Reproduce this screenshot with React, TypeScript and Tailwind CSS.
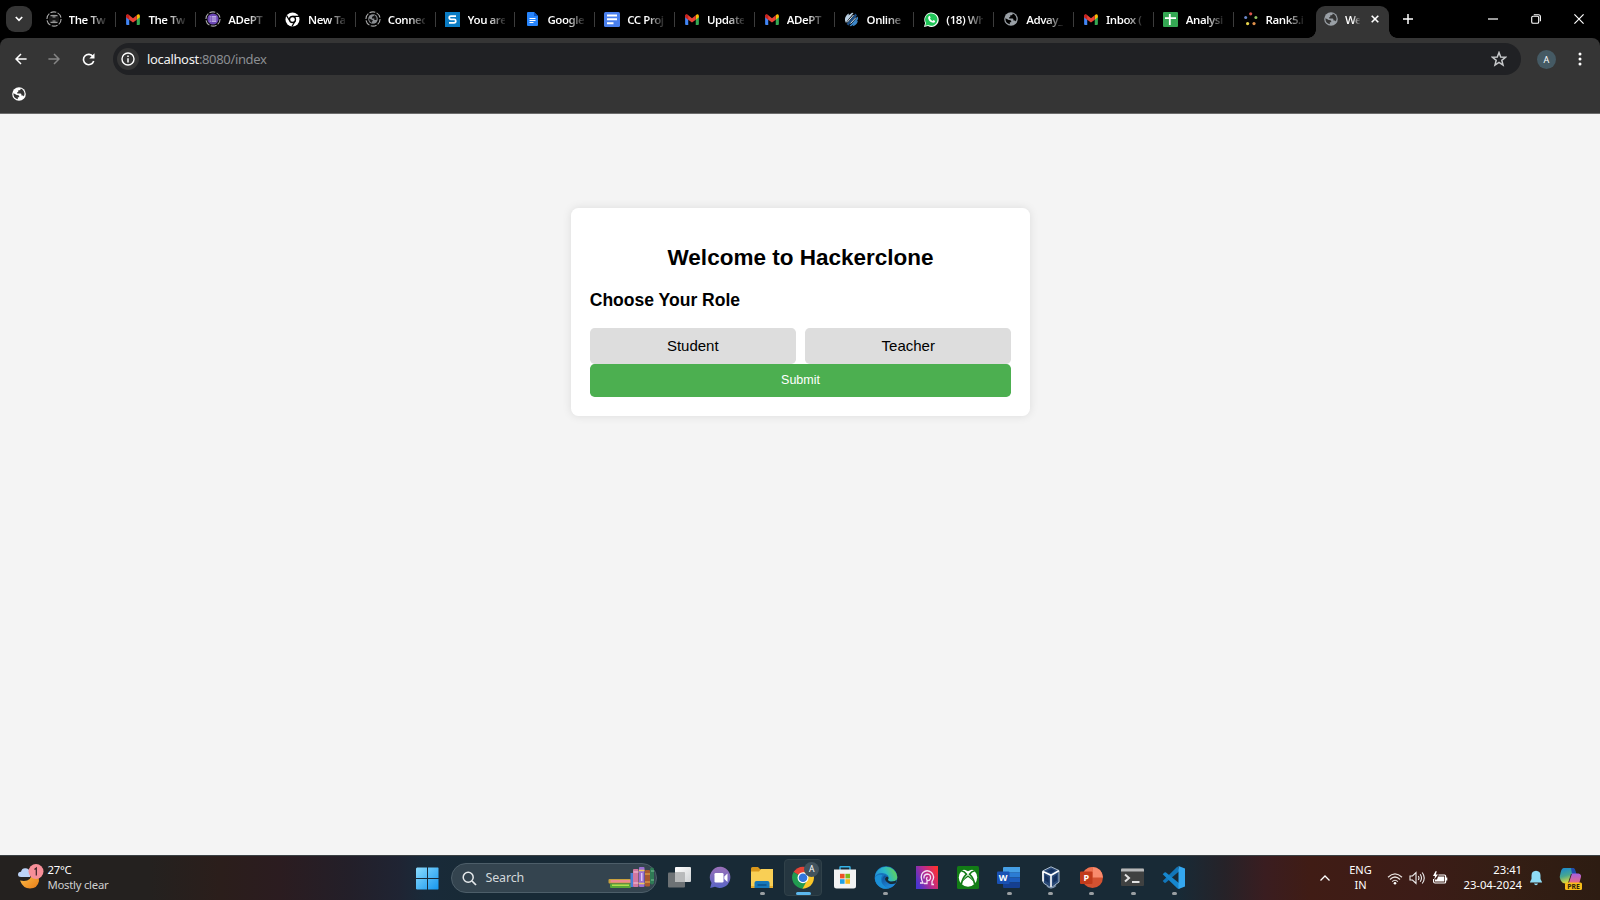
import type { ReactNode } from "react";

type IconProps = { size?: number; color?: string; bg?: string };

function Globe({ size = 14, color = "#9aa0a6", bg = "#000" }: IconProps) {
  return (
    <svg width={size} height={size} viewBox="0 0 14 14" className="shrink-0">
      <circle cx="7" cy="7" r="6.8" fill={color} />
      <path d="M8.8 1.6Q8.900 3 7.600 3.200H6.300V4.500Q6.200 5.200 5.200 5.200V6.500H8.400Q9.400 6.600 9.400 7.600V8.500H10.600Q11.600 8.600 11.700 9.500 12.600 8 12.500 6.500 12 3 8.800 1.600Z" fill={bg} />
      <path d="M1.500 6.200 4.800 7.900Q6.800 7.800 7.200 9V10.200H5.800V12.300Q1.600 11.200 1.400 7Z" fill={bg} />
    </svg>
  );
}

function Ring({ children }: { children: ReactNode }) {
  return (
    <svg width="16" height="16" viewBox="0 0 16 16" className="shrink-0">
      <circle cx="8" cy="8" r="7.1" fill="none" stroke="#a9a9a9" strokeWidth="1.1" strokeDasharray="6 1.400" />
      {children}
    </svg>
  );
}

function Gmail() {
  return (
    <svg width="14" height="11" viewBox="0 0 15 12" className="shrink-0">
      <path d="M0 2.5 3.4 5V12H1Q0 12 0 11Z" fill="#4285f4" />
      <path d="M15 2.5 11.6 5V12H14Q15 12 15 11Z" fill="#34a853" />
      <path d="M11.6 1.3 13 .4Q15 0 15 2.2V3.6L11.6 6.2Z" fill="#fbbc04" />
      <path d="M0 3.6V2Q.3 0 2.4.6L7.5 4.5 11.6 1.3V6.2L7.5 9.2 3.4 6.2Z" fill="#ea4335" />
      <path d="M0 3.6V2Q.3.6 1.6.4L3.4 1.7V6.2Z" fill="#c5221f" />
    </svg>
  );
}

const icons: Record<string, ReactNode> = {
  gmail: <Gmail />,
  globe: <Globe />,
  hourglass: (
    <Ring>
      <circle cx="8" cy="8" r="5.2" fill="#161616" />
      <path d="M4.5 4.700h7M4.500 11.300h7M6.5 6h3M6.5 10h3" stroke="#979797" strokeWidth="1.2" />
    </Ring>
  ),
  form: (
    <Ring>
      <circle cx="8" cy="8" r="5.6" fill="#6b47b5" />
      <path d="M4.7 5.8h1M4.7 8h1M4.7 10.2h1M6.6 5.8h4.7M6.6 8h4.7M6.6 10.2h4.7" stroke="#d9cdf3" strokeWidth="1.2" />
    </Ring>
  ),
  ringGlobe: (
    <Ring>
      <circle cx="8" cy="8" r="4.8" fill="#8a8d91" />
      <path d="M9.200 4Q9 5.200 7.400 5.500L7 6.700V7.500H9.300V9H11.500Q12.200 5.500 9.200 4ZM4 7.500 6.300 8.600 7.800 9.300V10.300H7V11.800Q4.200 11 4 7.500Z" fill="#111" />
    </Ring>
  ),
  chrome: (
    <svg width="15" height="15" viewBox="0 0 15 15" className="shrink-0">
      <circle cx="7.5" cy="7.5" r="7" fill="#fff" />
      <circle cx="7.5" cy="7.5" r="3" fill="#fff" stroke="#000" strokeWidth="1.3" />
      <path d="M7.5 4.4H14M4.8 9 1.6 3.6M10.2 9 7 14.4" stroke="#000" strokeWidth="1.2" />
    </svg>
  ),
  s: (
    <svg width="15" height="15" viewBox="0 0 15 15" className="shrink-0">
      <path d="M0 0h15v15H0z" fill="#0a7cc4" />
      <path d="M11 4.2H6Q4.2 4.2 4.2 5.8 4.2 7.4 6 7.4H9.2Q10.8 7.4 10.8 9 10.8 10.8 9 10.8H4" fill="none" stroke="#fff" strokeWidth="1.7" />
    </svg>
  ),
  docs: (
    <svg width="11" height="14" viewBox="0 0 11 14" className="shrink-0">
      <path d="M1 0H7L11 4V13Q11 14 10 14H1Q0 14 0 13V1Q0 0 1 0Z" fill="#2684fc" />
      <path d="M7 0 11 4H7Z" fill="#0b57c9" />
      <path d="M2.5 6.5h6M2.5 8.5h6M2.5 10.5h4" stroke="#fff" strokeWidth="1" />
    </svg>
  ),
  docsSquare: (
    <svg width="16" height="15" viewBox="0 0 16 15" className="shrink-0">
      <rect width="16" height="15" rx="1.5" fill="#4a80ee" />
      <path d="M3 3.4h10M3 7.200h10M3 11.200h6.5" stroke="#fff" strokeWidth="2" />
    </svg>
  ),
  online: (
    <svg width="15" height="15" viewBox="0 0 15 15" className="shrink-0">
      <path d="M1 8.500Q.5 5 3.500 2.200L5 1.500 4.500 3.500 8 .700 9.500 1 1.800 10.800Z" fill="#b9cfe2" />
      <path d="M2.500 12 11.500 1.600 13 3.500 4.500 13.500Z" fill="#1c4d84" />
      <path d="M5.500 14 14 4.600V7L12.500 9.500 14 8.500Q13 13 8.500 14.300L9.500 12.500 7 14.300Z" fill="#3b86c9" />
      <path d="M3 10.500 9.500 3M6.500 11.500 12 5.500" stroke="#d8e8f4" strokeWidth="1" />
    </svg>
  ),
  whatsapp: (
    <svg width="15" height="15" viewBox="0 0 15 15" className="shrink-0">
      <path d="M0 15 1.1 11A7.2 7.2 0 1 1 4 14Z" fill="#f4fff7" />
      <path d="M1.2 13.8 2 10.9A6.2 6.2 0 1 1 4.2 13Z" fill="#20c558" />
      <path d="M4.8 4.2Q5.5 3.5 6 4.2L6.6 5.6 6 6.5Q6.8 8.1 8.6 8.9L9.5 8Q11.4 8.8 11.2 9.2 10.8 10.8 9.2 10.8 5.3 10 4.2 6.4 4 5 4.8 4.2Z" fill="#fff" />
    </svg>
  ),
  sheets: (
    <svg width="15" height="15" viewBox="0 0 15 15" className="shrink-0">
      <rect width="15" height="15" rx="1" fill="#34a853" />
      <path d="M2 6.200h11M6.800 2v11" stroke="#fff" strokeWidth="1.800" />
    </svg>
  ),
  dots: (
    <svg width="14" height="14" viewBox="0 0 14 14" className="shrink-0">
      <circle cx="6.7" cy="1.8" r="1.6" fill="#d8544c" />
      <circle cx="1.7" cy="5.6" r="1.5" fill="#6b86c9" />
      <circle cx="11.9" cy="5.6" r="1.5" fill="#94c161" />
      <circle cx="3.6" cy="11.6" r="1.6" fill="#e8d44c" />
      <circle cx="10" cy="11.6" r="1.6" fill="#e0914b" />
    </svg>
  ),
};

const tabs: [string, string][] = [
  ["hourglass", "The Tw"],
  ["gmail", "The Tw"],
  ["form", "ADePT"],
  ["chrome", "New Ta"],
  ["ringGlobe", "Connec"],
  ["s", "You are"],
  ["docs", "Google"],
  ["docsSquare", "CC Proj"],
  ["gmail", "Update"],
  ["gmail", "ADePT"],
  ["online", "Online"],
  ["whatsapp", "(18) Wh"],
  ["globe", "Advay_"],
  ["gmail", "Inbox ("],
  ["sheets", "Analysi"],
  ["dots", "Rank5.i"],
];

function TabStrip() {
  return (
    <div className="flex h-[38px] shrink-0 items-center bg-black text-white">
      <div className="ml-[6px] flex h-[26px] w-[26px] shrink-0 items-center justify-center rounded-[9px] bg-[#353535]">
        <svg width="10" height="8" viewBox="0 0 10 8">
          <path d="M1.8 2 5 5.3 8.2 2" fill="none" stroke="#fff" strokeWidth="1.7" />
        </svg>
      </div>
      <div className="ml-[4.600px] flex h-full items-center">
        {tabs.map(([icon, label], i) => (
          <div key={i} className="flex h-[15px] w-[79.800px] shrink-0 items-center border-r-[1.5px] border-[#3c3c3c] pl-[9px] last:w-[74.500px] last:border-0">
            <div className="flex w-[16px] shrink-0 items-center justify-center">{icons[icon]}</div>
            <div className="ml-[7px] mt-[2px] w-[37px] whitespace-nowrap bg-gradient-to-r from-white from-55% to-[#222] bg-clip-text text-[11.500px] font-semibold leading-[16px] tracking-[-0.450px] text-transparent">
              {label}
            </div>
          </div>
        ))}
      </div>
      <div className="flex h-full items-end">
        <div className="h-[8px] w-[8px] bg-[radial-gradient(circle_at_0_0,#000_7.5px,#353535_8px)]" />
        <div className="flex h-[32px] w-[73px] items-center rounded-t-[9px] bg-[#353535] pb-[6px] pl-[8px]">
          <Globe bg="#353535" />
          <div className="ml-[7px] mt-[2px] w-[15px] whitespace-nowrap bg-gradient-to-r from-white from-50% to-[#444] bg-clip-text text-[11.5px] font-semibold leading-[16px] tracking-[-0.800px] text-transparent">
            We
          </div>
          <svg width="8" height="8" viewBox="0 0 8 8" className="ml-[10.500px]">
            <path d="M.7.7 7.3 7.3M7.3.7.7 7.3" stroke="#fff" strokeWidth="1.6" />
          </svg>
        </div>
        <div className="h-[8px] w-[8px] bg-[radial-gradient(circle_at_100%_0,#000_7.5px,#353535_8px)]" />
      </div>
      <svg width="10" height="10" viewBox="0 0 10 10" className="ml-[6px]">
        <path d="M5 0v10M0 5h10" stroke="#fff" strokeWidth="1.5" />
      </svg>
      <div className="ml-auto flex items-center pb-[1px] pr-[16px]">
        <svg width="10" height="10" viewBox="0 0 10 10">
          <path d="M0 5h10" stroke="#fff" strokeWidth="1.2" />
        </svg>
        <svg width="10" height="10" viewBox="0 0 10 10" className="ml-[33px]">
          <rect x=".7" y="2.3" width="7" height="7" rx="1.3" fill="none" stroke="#fff" strokeWidth="1.1" />
          <path d="M2.8.7H7.4Q9.4.7 9.4 2.7V7.2" fill="none" stroke="#fff" strokeWidth="1.1" />
        </svg>
        <svg width="10" height="10" viewBox="0 0 10 10" className="ml-[33px]">
          <path d="M.4.4 9.6 9.6M9.6.4.4 9.6" stroke="#fff" strokeWidth="1.2" />
        </svg>
      </div>
    </div>
  );
}

function Toolbar() {
  return (
    <div className="bg-black">
      <div className="flex h-[76px] flex-col rounded-t-[8px] border-b border-[#6b6b6b] bg-[#353535]">
        <div className="flex h-[42px] items-center">
          <svg width="12" height="12" viewBox="0 0 12 12" className="ml-[15px]">
            <path d="M11.6 6H1.2M6 1 1 6 6 11" fill="none" stroke="#fff" strokeWidth="1.5" />
          </svg>
          <svg width="12" height="12" viewBox="0 0 12 12" className="ml-[21px]">
            <path d="M.4 6H10.8M6 1 11 6 6 11" fill="none" stroke="#858585" strokeWidth="1.5" />
          </svg>
          <svg width="13" height="13" viewBox="0 0 13 13" className="ml-[22px]">
            <path d="M11 3.6A5.2 5.2 0 1 0 11.7 8" fill="none" stroke="#fff" strokeWidth="1.6" />
            <path d="M12.5.3V5.5H7.3Z" fill="#fff" />
          </svg>
          <div className="ml-[18px] flex h-[32px] w-[1408px] items-center rounded-full bg-[#202124] pl-[4px] pr-[14px]">
            <div className="flex h-[22px] w-[22px] items-center justify-center rounded-full bg-[#353535]">
              <svg width="14" height="14" viewBox="0 0 14 14">
                <circle cx="7" cy="7" r="6" fill="none" stroke="#fff" strokeWidth="1.4" />
                <path d="M7 3.5v1.5M7 6.2v4.3" stroke="#fff" strokeWidth="1.5" />
              </svg>
            </div>
            <div className="ml-[8px] text-[13px] leading-[18px] tracking-[-0.340px] text-[#8b8e92]">
              <span className="text-[#f1f1f1]">localhost</span>:8080/index
            </div>
            <svg width="16" height="16" viewBox="0 0 16 16" className="ml-auto">
              <path d="M8 1.6 9.7 6.1 14.5 6.3 10.8 9.3 12 14 8 11.3 4 14 5.2 9.3 1.5 6.3 6.3 6.1Z" fill="none" stroke="#c6c8ca" strokeWidth="1.5" />
            </svg>
          </div>
          <div className="ml-[16px] flex h-[19px] w-[19px] items-center justify-center rounded-full bg-[#455a64] text-[9px] leading-none text-white">A</div>
          <svg width="4" height="14" viewBox="0 0 4 14" className="ml-[22px]">
            <circle cx="2" cy="2" r="1.5" fill="#fff" />
            <circle cx="2" cy="7" r="1.5" fill="#fff" />
            <circle cx="2" cy="12" r="1.5" fill="#fff" />
          </svg>
        </div>
        <div className="flex h-[28px] items-center pl-[12px]">
          <Globe color="#fff" bg="#353535" />
        </div>
      </div>
    </div>
  );
}

function RoleCard() {
  return (
    <div className="ml-px mt-[94px] flex h-[208px] w-[459px] flex-col rounded-[7.5px] bg-white px-[18.750px] font-['Liberation_Sans',Arial,sans-serif] text-black shadow-[0_0_9.4px_rgba(0,0,0,0.1)]">
      <h2 className="mt-[37px] text-center text-[22.5px] font-bold leading-[26px]">Welcome to Hackerclone</h2>
      <h3 className="mt-[19px] text-[17.55px] font-bold leading-[20px]">Choose Your Role</h3>
      <div className="mt-[18px] flex h-[36px] shrink-0 gap-[9.4px]">
        <div className="flex flex-1 items-center justify-center rounded-[4.7px] bg-[#ddd] text-[15px]">Student</div>
        <div className="flex flex-1 items-center justify-center rounded-[4.7px] bg-[#ddd] text-[15px]">Teacher</div>
      </div>
      <button className="h-[33px] shrink-0 rounded-[4.7px] bg-[#4caf50] text-[12.5px] leading-none text-white">Submit</button>
    </div>
  );
}

function Books() {
  return (
    <svg width="47" height="24" viewBox="0 0 47 24">
      <rect x="0.500" y="13" width="22.500" height="4.500" rx="1" fill="#c9a13e" />
      <rect x="2.500" y="14" width="20" height="2.500" fill="#ee8a94" />
      <rect x="2" y="17.500" width="21" height="4.500" rx="1" fill="#57a639" />
      <rect x="4" y="18.500" width="17" height="1.500" fill="#b5dc50" />
      <rect x="22.500" y="7" width="3" height="14" fill="#4a7fd6" />
      <rect x="25" y="3" width="5.500" height="18" rx="1" fill="#d277a0" />
      <path d="M25.500 6h5M25.500 17h5" stroke="#f3c8dd" />
      <rect x="31" y="1" width="5.500" height="20" rx="1" fill="#9a6fd3" />
      <path d="M31 4.500h5.500M31 17.500h5.500" stroke="#f0c95b" strokeWidth="1.500" />
      <path d="M33.700 7v8" stroke="#dcc9f4" strokeWidth="1.500" />
      <rect x="37" y="4" width="5" height="16.500" rx="1" fill="#a9582f" />
      <path d="M37 8h5M37 16h5" stroke="#e9b54f" />
      <rect x="42" y="1.500" width="4" height="17" rx="2" fill="#2f7a55" />
      <path d="M43 5h3M43 14h3" stroke="#79c292" />
    </svg>
  );
}

const apps: { icon: ReactNode; state?: "open" | "active" }[] = [
  {
    icon: (
      <>
        <defs>
          <linearGradient id="tvA" x2="1" y2="1"><stop stopColor="#fff" /><stop offset="1" stopColor="#cfd2d4" /></linearGradient>
        </defs>
        <rect x="7" y="1" width="16" height="15" rx="1" fill="url(#tvA)" />
        <rect x="0" y="6.500" width="17" height="15" rx="1" fill="#7c7f80" fillOpacity=".85" />
        <path d="M7 6.500H17V16H7Z" fill="#b8babb" />
      </>
    ),
  },
  {
    icon: (
      <>
        <defs>
          <linearGradient id="chat" x2="0" y2="1"><stop stopColor="#9a70b8" /><stop offset="1" stopColor="#5965c6" /></linearGradient>
        </defs>
        <path d="M12 .8A10.600 10.600 0 1 1 6 20.800L1.200 22 2.500 17A10.600 10.600 0 0 1 12 .8Z" fill="url(#chat)" />
        <rect x="5.500" y="7" width="9" height="9.500" rx="1.300" fill="#fff" />
        <path d="M15.300 10.500 18.500 7.500V16L15.300 13Z" fill="#fff" />
      </>
    ),
  },
  {
    state: "open",
    icon: (
      <>
        <path d="M1 2.500Q1 1 2.500 1H8L10.500 3.500H22Q23 3.500 23 5V12H1Z" fill="#d9971b" />
        <path d="M1 5.500H9L11 3H23V22H1Z" fill="#f9cf55" />
        <path d="M1 21H23" stroke="#e9ad2d" strokeWidth="2" />
        <path d="M4.500 22V17Q4.500 15 6.500 15H17.500Q19.500 15 19.500 17V22Z" fill="#1677b9" />
        <path d="M7.500 19H16.500" stroke="#0b518a" strokeWidth="1.500" />
      </>
    ),
  },
  {
    state: "active",
    icon: (
      <>
        <path d="M12 11.500 2.500 6A11.200 11.200 0 0 1 21.500 6Z" fill="#e44336" />
        <path d="M12 11.500 2.500 6A11.200 11.200 0 0 0 12 22.700L16.500 14.500Z" fill="#219b50" />
        <path d="M12 11.500 16 14.500 11.500 22.700A11.200 11.200 0 0 0 21.700 6.300H12Z" fill="#fbc728" />
        <circle cx="12" cy="11.700" r="5.500" fill="#fff" />
        <circle cx="12" cy="11.700" r="4.300" fill="#3376dd" />
      </>
    ),
  },
  {
    icon: (
      <>
        <path d="M7 4V1.300Q7 .700 7.700 .700H16.300Q17 .700 17 1.300V4" fill="none" stroke="#35b4e8" strokeWidth="1.400" />
        <path d="M1 3.500H23V20Q23 22.500 20.500 22.500H3.500Q1 22.500 1 20Z" fill="#f2f3f4" />
        <path d="M7 7.800h4.600v4.600H7z" fill="#ef5126" />
        <path d="M12.400 7.800h4.600v4.600h-4.600z" fill="#7eb91c" />
        <path d="M7 13.200h4.600v4.600H7z" fill="#1da1e8" />
        <path d="M12.400 13.200h4.600v4.600h-4.600z" fill="#f8b71b" />
      </>
    ),
  },
  {
    state: "open",
    icon: (
      <>
        <defs>
          <linearGradient id="edgeA" x1="0" y1=".6" x2="1" y2=".3"><stop stopColor="#238fd8" /><stop offset=".5" stopColor="#2cb9c8" /><stop offset="1" stopColor="#67d64c" /></linearGradient>
          <linearGradient id="edgeB" x2=".5" y2="1"><stop stopColor="#0d4a92" /><stop offset="1" stopColor="#218ada" /></linearGradient>
        </defs>
        <circle cx="12" cy="11.500" r="11.300" fill="#1673bd" />
        <path d="M.8 11A11.300 11.300 0 0 1 23.300 11Q23.300 15.500 18 15.500 14 15.500 14 13.500 15.500 11.500 14 9.500 12 7 8 7 3 7 .8 11Z" fill="url(#edgeA)" />
        <path d="M8.500 9Q5.500 13 8.500 18 12 22.500 17 21.500 12 24 7.500 21.900 1 18.500 .8 12 3 8 8.500 9Z" fill="#1b8fd6" />
        <path d="M10.500 9.500Q6.500 13 9 18 12.500 22.500 17 21.300 20 20 21.700 17.300 18 19 14.500 17.500 11 15.800 10.800 13 10.800 11 12.500 10.300 11.800 9.300 10.500 9.500Z" fill="url(#edgeB)" />
        <path d="M14 13.500Q14 15.500 18 15.500 21.500 15.500 22.700 13.800L21.700 17.300Q18 18.600 15 17.400 11 15.500 11 12.800 11.500 11 13 10.500 15.200 11.500 14 13.500Z" fill="#182a35" />
      </>
    ),
  },
  {
    icon: (
      <>
        <defs>
          <linearGradient id="finger" x1="0" y1=".7" x2="1" y2=".2"><stop stopColor="#4a35d0" /><stop offset=".5" stopColor="#b72b90" /><stop offset="1" stopColor="#ff3130" /></linearGradient>
        </defs>
        <rect x="1" y="0" width="22" height="23" fill="url(#finger)" />
        <path d="M5 17H8Q4.500 10 8 6.500 12 3 16.500 6.500 20.500 11 17 15.500V18.500H19M9 17.500H12V14.500M9 12.500Q8.500 8.500 12.200 8 16 8.200 15.500 12.500 14.500 15 12.500 14.500 10.500 12.500 12.500 11" fill="none" stroke="#f3dff3" strokeWidth="1.300" />
      </>
    ),
  },
  {
    icon: (
      <>
        <rect x="1" y="0" width="22" height="23" rx="1.500" fill="#127c16" />
        <circle cx="12" cy="11.500" r="9.200" fill="#fff" />
        <path d="M5.500 3.500Q8.500 3 12 5.300 15.500 3 18.500 3.500L17 1H7Z" fill="#127c16" />
        <path d="M5.200 4.800Q8.500 5.300 10.500 8.200 6 12.500 5.400 18.400M18.800 4.800Q15.500 5.300 13.500 8.200 18 12.500 18.600 18.400" fill="none" stroke="#127c16" strokeWidth="1.600" />
        <path d="M5.400 18.400Q6.500 12.800 12 9.300 17.500 12.800 18.600 18.400 17.500 14.500 12 11 6.500 14.500 5.400 18.400Z" fill="#127c16" />
      </>
    ),
  },
  {
    state: "open",
    icon: (
      <>
        <path d="M6 2Q6 1 7 1H23V6.500H6Z" fill="#459fe5" />
        <path d="M6 6.300H23V11.500H6Z" fill="#2b7cd3" />
        <path d="M6 11.500H23V16.500H6Z" fill="#1c5cbc" />
        <path d="M6 16.500H23V21Q23 22 22 22H7Q6 22 6 21Z" fill="#153f91" />
        <rect x="0" y="5.500" width="12.500" height="12.500" rx="1" fill="#1951b3" />
        <text x="6.200" y="15" textAnchor="middle" fontSize="9" fontWeight="700" fill="#fff">W</text>
      </>
    ),
  },
  {
    state: "open",
    icon: (
      <>
        <path d="M3.500 5 12 .8 20 4.500V16L12 22 4.500 17Z" fill="#2a4a78" stroke="#a9bacb" strokeWidth="1" />
        <path d="M4 5.500 12 9.300 19.800 4.800M12 9.300V21M4 5.500V15.500" fill="none" stroke="#fff" strokeWidth="1.600" />
        <path d="M6 9V14.500L9.700 17V11.500ZM18 8.500 14.300 11.200V17L18 14.500ZM8 5.300 12.500 3 16 4.800 12 7Z" fill="#14305c" />
        <path d="M8 20Q12 24 17 19.500" fill="none" stroke="#7b91ac" strokeWidth="1.200" />
      </>
    ),
  },
  {
    state: "open",
    icon: (
      <>
        <circle cx="12.500" cy="11.500" r="10.500" fill="#d45231" />
        <path d="M12.500 1A10.500 10.500 0 0 1 23 11.500H12.500Z" fill="#f98b6d" />
        <path d="M12.500 1V11.500H2A10.500 10.500 0 0 1 12.500 1Z" fill="#ee7251" />
        <rect x="0" y="5.500" width="12.500" height="12.500" rx="1" fill="#c13b1b" />
        <text x="6.300" y="15" textAnchor="middle" fontSize="9" fontWeight="700" fill="#fff">P</text>
      </>
    ),
  },
  {
    state: "open",
    icon: (
      <>
        <rect x="0" y="2.500" width="23" height="17.500" rx="1" fill="#3f4141" />
        <path d="M0 5.500V3.500Q0 2.500 1 2.500H22Q23 2.500 23 3.500V5.500Z" fill="#b6b8b9" />
        <path d="M4 8.500 8 12 4 15.500" fill="none" stroke="#e1e1e1" strokeWidth="2" />
        <path d="M11 16H18.500" stroke="#fff" strokeWidth="1.700" />
      </>
    ),
  },
  {
    state: "open",
    icon: (
      <>
        <path d="M.7 15 15.500 .500 17.500 5 4 16.500Q3.300 17.300 2.500 16.800Z" fill="#1276b9" />
        <path d="M.7 8.200 2.500 6.600Q3.300 6 4 6.600L17.500 17.500V23L15.500 22.500Z" fill="#1686cd" />
        <path d="M16.500 0 23 2.500V20.500L16.500 23Z" fill="#34a7ef" />
      </>
    ),
  },
];

function Taskbar() {
  return (
    <div className="flex h-[45px] shrink-0 items-center border-t border-[#3a4043] bg-[linear-gradient(90deg,#24211f_0,#24211f_150px,#2b1e1b_220px,#2b1c20_280px,#231f29_350px,#1f2433_400px,#192a39_425px,#182a36_470px,#182a36_1180px,#262228_1225px,#3a1d20_1265px,#401c15_1310px,#3c1c17_1420px,#341e14_1510px,#2d1c12_1600px)] text-white">
      <div className="flex w-[416px] items-center pb-[2px] pl-[17px]">
        <svg width="27" height="26" viewBox="0 0 27 26">
          <defs>
            <linearGradient id="moon" x2="1" y2="1"><stop stopColor="#ffc44e" /><stop offset="1" stopColor="#e77c16" /></linearGradient>
          </defs>
          <path d="M3 16.500Q14 19 15.500 8.500 22.500 11 22 17 20.500 24.500 13 24.500 6 24.500 3 16.500Z" fill="url(#moon)" />
          <path d="M4 13Q1 13 1 10.500 1 8 4 7.700 5 4 8.500 4.300 12 4.500 13 8V13Z" fill="#bcd2f5" />
          <circle cx="19" cy="7.500" r="7.500" fill="#f78f98" />
          <path d="M17.500 5.500 19.300 4V11.500" fill="none" stroke="#3a2225" strokeWidth="1.200" />
        </svg>
        <div className="ml-[3.500px] text-[11.300px] leading-[15px] tracking-[-0.250px]">
          <div>27°C</div>
          <div className="text-[#cfcfcf]">Mostly clear</div>
        </div>
      </div>
      <svg width="23" height="23" viewBox="0 0 23 23" className="shrink-0">
        <defs>
          <linearGradient id="win" x2="1" y2="1"><stop stopColor="#8bdcff" /><stop offset="1" stopColor="#1596ee" /></linearGradient>
        </defs>
        <path d="M1 .5H11V11H0V1.500ZM12 .5H22L22.500 1V11H12ZM0 12H11V22.500H1L0 22ZM12 12H22.500V22L22 22.500H12Z" fill="url(#win)" />
      </svg>
      <div className="ml-[12px] flex h-[30px] w-[206px] shrink-0 items-center rounded-full border border-[#4d5e69] bg-[#34444f] pl-[10px]">
        <svg width="15" height="15" viewBox="0 0 15 15">
          <circle cx="6.200" cy="6.200" r="5" fill="none" stroke="#e6e9eb" strokeWidth="1.500" />
          <path d="M10 10 14 14" stroke="#e6e9eb" strokeWidth="1.700" />
        </svg>
        <div className="ml-[8.500px] text-[12.500px] leading-[18px] tracking-[-0.150px] text-[#d3d8db]">Search</div>
        <div className="ml-auto pr-px"><Books /></div>
      </div>
      <div className="ml-[2px] flex h-full shrink-0">
        {apps.map((app, i) => (
          <div key={i} className="flex w-[41.240px] flex-col items-center pt-[3px]">
            <div className={app.state === "active" ? "relative flex h-[37px] w-[38px] flex-col items-center rounded-[4px] border border-[#304149] bg-[#253640] pt-[6px]" : "relative flex h-[37px] w-[38px] flex-col items-center pt-[7px]"}>
              <svg width="24" height="24" viewBox="0 0 24 24">{app.icon}</svg>
              {app.state === "active" && (
                <div className="absolute right-[2px] top-[2px] flex h-[15px] w-[15px] items-center justify-center rounded-full bg-[#42535d] text-[8.500px] leading-none">A</div>
              )}
              {app.state === "open" && <div className="mt-[2px] h-[3px] w-[5px] shrink-0 rounded-full bg-[#9a9fa2]" />}
              {app.state === "active" && <div className="mt-[2px] h-[3px] w-[15px] shrink-0 rounded-full bg-[#5cb8ee]" />}
            </div>
          </div>
        ))}
      </div>
      <div className="ml-auto flex items-center pr-[18px] text-[11.300px] leading-[15px]">
        <svg width="12" height="8" viewBox="0 0 12 8">
          <path d="M1.500 6.500 6 2 10.500 6.500" fill="none" stroke="#fff" strokeWidth="1.300" />
        </svg>
        <div className="ml-[17.500px] w-[24px] pb-[2px] text-center text-[11px]">
          <div>ENG</div>
          <div>IN</div>
        </div>
        <svg width="16" height="13" viewBox="0 0 16 13" className="ml-[14.500px]">
          <path d="M1 5.200Q8-1.500 15 5.200M3 7.500Q8 2.500 13 7.500M5.200 9.700Q8 6.800 10.800 9.700" fill="none" stroke="#e8e2df" strokeWidth="1.200" />
          <circle cx="8" cy="11.200" r="1.300" fill="#fff" />
        </svg>
        <svg width="17" height="14" viewBox="0 0 17 14" className="ml-[6px]">
          <path d="M1 5H3.500L7 1.500V12.500L3.500 9H1ZM9.300 5Q10.600 7 9.300 9M11.200 3.300Q13.800 7 11.200 10.700M13.200 1.500Q17.300 7 13.200 12.500" fill="none" stroke="#eee" strokeWidth="1.100" />
        </svg>
        <svg width="16" height="14" viewBox="0 0 16 14" className="ml-[6px]">
          <path d="M6.500 4H12.500Q13.600 4 13.600 5V11Q13.600 12 12.500 12H3Q1.600 12 1.600 10.500V8" fill="none" stroke="#fff" strokeWidth="1.200" />
          <path d="M6 5.500H12.300V10.600H3V8.500H5ZM14 6.500H15.300V9.500H14ZM3.500 .3 1 5H3L2.300 8.500 6 3.500H3.800L4.800 .3Z" fill="#fff" />
        </svg>
        <div className="ml-[14px] w-[60px] whitespace-nowrap pb-[2px] text-right tracking-[-0.050px]">
          <div>23:41</div>
          <div>23-04-2024</div>
        </div>
        <svg width="14" height="16" viewBox="0 0 14 16" className="ml-[7px]">
          <path d="M7 .7Q11.500 1 11.500 5.500V9L13 12V12.600H1V12L2.500 9V5.500Q2.500 1 7 .7ZM5 13.500H9Q8.500 15.300 7 15.300 5.500 15.300 5 13.500Z" fill="#8fdcf5" />
        </svg>
        <svg width="23" height="23" viewBox="0 0 23 23" className="ml-[16px]">
          <defs>
            <linearGradient id="copA" x2=".3" y2="1"><stop stopColor="#1686d5" /><stop offset=".55" stopColor="#48a78f" /><stop offset="1" stopColor="#e5d937" /></linearGradient>
            <linearGradient id="copB" x2="0" y2="1"><stop stopColor="#a760df" /><stop offset="1" stopColor="#ef6b79" /></linearGradient>
          </defs>
          <path d="M5 1H13Q15.500 1 16 4L17 7H12L9 16Q4 18 1.500 13 0 10 1.500 6 2.500 1 5 1Z" fill="url(#copA)" />
          <path d="M12 1H14Q16 1 16.500 4L17.500 7H13Z" fill="#204bad" />
          <path d="M13 6.500H19.500Q22.500 7 22 10L20 17H9.500Z" fill="url(#copB)" />
          <rect x="6" y="15.500" width="17" height="7.500" rx="1.500" fill="#f7bd19" />
          <text x="14.500" y="21.600" textAnchor="middle" fontSize="6.800" fontWeight="700" fill="#2c210d">PRE</text>
        </svg>
      </div>
    </div>
  );
}

export default function App() {
  return (
    <div className="flex h-[900px] w-[1600px] flex-col overflow-hidden bg-[#f4f4f4] font-['Noto_Sans','Open_Sans',sans-serif]">
      <TabStrip />
      <Toolbar />
      <main className="flex flex-1 flex-col items-center">
        <RoleCard />
      </main>
      <Taskbar />
    </div>
  );
}
